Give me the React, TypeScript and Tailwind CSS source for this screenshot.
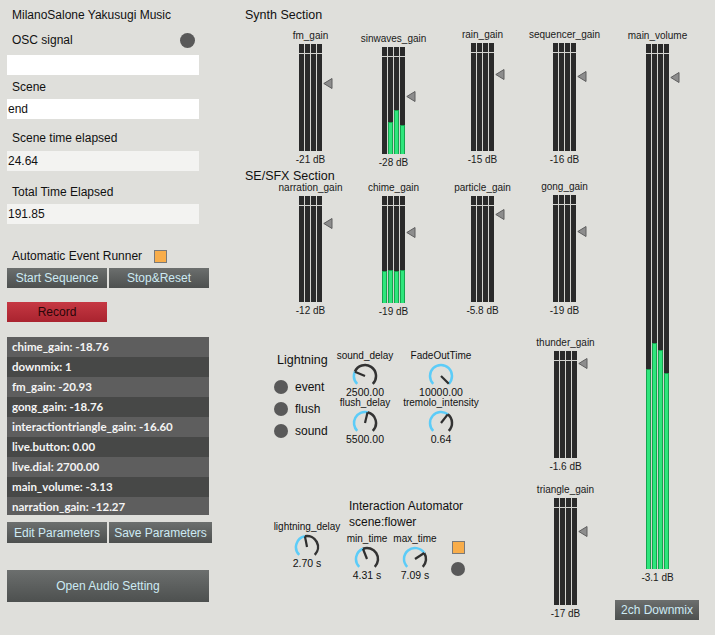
// Max patch control surface: left status/param column + right patcher canvas

type MeterSpec = {
  label: string
  db: string
  pos: string
  h: string
  tri: number
  levels: number[]
}

const meters: MeterSpec[] = [
  { label: "fm_gain", db: "-21 dB", pos: "left-[50px] top-[30px]", h: "h-[107px]", tri: 39, levels: [0, 0, 0, 0] },
  { label: "sinwaves_gain", db: "-28 dB", pos: "left-[133px] top-[33px]", h: "h-[107px]", tri: 49, levels: [0, 32, 44, 29] },
  { label: "rain_gain", db: "-15 dB", pos: "left-[222px] top-[29px]", h: "h-[108px]", tri: 31, levels: [0, 0, 0, 0] },
  { label: "sequencer_gain", db: "-16 dB", pos: "left-[304px] top-[29px]", h: "h-[108px]", tri: 33, levels: [0, 0, 0, 0] },
  { label: "narration_gain", db: "-12 dB", pos: "left-[50px] top-[182px]", h: "h-[106px]", tri: 27, levels: [0, 0, 0, 0] },
  { label: "chime_gain", db: "-19 dB", pos: "left-[133px] top-[182px]", h: "h-[107px]", tri: 36, levels: [32, 33, 32, 33] },
  { label: "particle_gain", db: "-5.8 dB", pos: "left-[222px] top-[182px]", h: "h-[106px]", tri: 18, levels: [0, 0, 0, 0] },
  { label: "gong_gain", db: "-19 dB", pos: "left-[304px] top-[181px]", h: "h-[107px]", tri: 36, levels: [0, 0, 0, 0] },
  { label: "thunder_gain", db: "-1.6 dB", pos: "left-[305px] top-[337px]", h: "h-[107px]", tri: 12, levels: [0, 0, 0, 0] },
  { label: "triangle_gain", db: "-17 dB", pos: "left-[305px] top-[484px]", h: "h-[107px]", tri: 33, levels: [0, 0, 0, 0] },
  { label: "main_volume", db: "-3.1 dB", pos: "left-[397px] top-[30px]", h: "h-[525px]", tri: 33, levels: [200, 226, 219, 196] },
]

const dials = [
  { label: "sound_delay", value: "2500.00", v: 0.25, pos: "left-[105px] top-[350px]" },
  { label: "FadeOutTime", value: "10000.00", v: 1, pos: "left-[181px] top-[350px]" },
  { label: "flush_delay", value: "5500.00", v: 0.55, pos: "left-[105px] top-[397px]" },
  { label: "tremolo_intensity", value: "0.64", v: 0.64, pos: "left-[181px] top-[397px]" },
  { label: "lightning_delay", value: "2.70 s", v: 0.46, pos: "left-[47px] top-[521px]" },
  { label: "min_time", value: "4.31 s", v: 0.42, pos: "left-[107px] top-[533px]" },
  { label: "max_time", value: "7.09 s", v: 0.71, pos: "left-[155px] top-[533px]" },
]

const params = [
  "chime_gain: -18.76",
  "downmix: 1",
  "fm_gain: -20.93",
  "gong_gain: -18.76",
  "interactiontriangle_gain: -16.60",
  "live.button: 0.00",
  "live.dial: 2700.00",
  "main_volume: -3.13",
  "narration_gain: -12.27",
]

const btn =
  "flex items-center justify-center bg-linear-to-b from-[#6c6f6e] to-[#4d504f] text-[12px] text-[#cdeaf3]"

function Meter({ m }: { m: MeterSpec }) {
  return (
    <div className={`absolute flex w-[91px] flex-col items-center ${m.pos}`}>
      <div className="h-[12px] whitespace-nowrap text-[10px] leading-[12px] text-[#1a1a1a]">{m.label}</div>
      <div className={`relative mt-[2px] flex w-[23px] gap-px bg-[#d4d4d0] ${m.h}`}>
        {m.levels.map((lv, i) => (
          <div key={i} className="flex w-[5px] flex-col gap-px">
            <div className="h-[9px] bg-[#2a2a2a]" />
            <div className="relative flex-1 bg-[#2a2a2a]">
              {lv > 0 && (
                <div
                  className="absolute inset-x-0 bottom-0 border-x border-t border-[#17a34f] bg-[#2ee67c]"
                  style={{ height: lv }}
                />
              )}
            </div>
          </div>
        ))}
        <svg
          className="absolute left-full ml-px"
          style={{ top: m.tri - 5 }}
          width="10"
          height="11"
          viewBox="0 0 10 11"
        >
          <polygon points="9,0.5 9,10.5 0.8,5.5" fill="#8d8d8d" stroke="#5e5e5e" strokeWidth="1" />
        </svg>
      </div>
      <div className="mt-[3px] whitespace-nowrap text-[10px] leading-[12px] text-[#1a1a1a]">{m.db}</div>
    </div>
  )
}

function Dial({ label, value, v, pos }: { label: string; value: string; v: number; pos: string }) {
  const pt = (a: number) => [13 + 11 * Math.cos((a * Math.PI) / 180), 13 + 11 * Math.sin((a * Math.PI) / 180)]
  const arc = (from: number, to: number) => {
    const [x1, y1] = pt(from)
    const [x2, y2] = pt(to)
    return `M${x1} ${y1} A11 11 0 ${to - from > 180 ? 1 : 0} 1 ${x2} ${y2}`
  }
  const a = 135 + 270 * v
  const [nx, ny] = pt(a)
  return (
    <div className={`absolute flex w-[90px] flex-col items-center ${pos}`}>
      <div className="h-[12px] whitespace-nowrap text-[10px] leading-[12px] text-[#111]">{label}</div>
      <svg className="mt-px" width="26" height="26" viewBox="0 0 26 26">
        {v < 1 && <path d={arc(a, 405)} fill="none" stroke="#333" strokeWidth="2.5" />}
        <path d={arc(135, a)} fill="none" stroke="#5cccf8" strokeWidth="2.5" />
        <line x1="13" y1="13" x2={nx} y2={ny} stroke="#2e2e2e" strokeWidth="2.2" />
      </svg>
      <div className="-mt-[3px] whitespace-nowrap text-[10.5px] leading-[12px] text-[#111]">{value}</div>
    </div>
  )
}

function LeftPanel() {
  return (
    <div className="flex w-[215px] shrink-0 flex-col pl-[7px] text-[12px] text-[#111]">
      <div className="flex h-[30px] items-center pl-[5px]">MilanoSalone Yakusugi Music</div>
      <div className="flex h-[20px] w-[192px] items-center justify-between pl-[5px] pr-[4px]">
        <span>OSC signal</span>
        <span className="h-[15px] w-[15px] rounded-full bg-[#595959]" />
      </div>
      <div className="mt-[5px] h-[20px] w-[192px] bg-white" />
      <div className="pl-[5px] pt-[4px] pb-[4px] leading-[16px]">Scene</div>
      <div className="flex h-[20px] w-[192px] items-center bg-white pl-px">end</div>
      <div className="pl-[5px] pt-[11px] pb-[5px] leading-[16px]">Scene time elapsed</div>
      <div className="flex h-[20px] w-[192px] items-center bg-[#f3f3f1] pl-px">24.64</div>
      <div className="pl-[5px] pt-[13px] pb-[4px] leading-[16px]">Total Time Elapsed</div>
      <div className="flex h-[20px] w-[192px] items-center bg-[#f3f3f1] pl-px">191.85</div>

      <div className="mt-[24px] flex h-[16px] items-center gap-[12px] pl-[5px]">
        <span>Automatic Event Runner</span>
        <span className="h-[13px] w-[13px] border border-[#7a7a7a] bg-[#f8ad4a]" />
      </div>
      <div className="mt-[4px] flex gap-[2px]">
        <div className={`${btn} h-[20px] w-[100px]`}>Start Sequence</div>
        <div className={`${btn} h-[20px] w-[100px]`}>Stop&amp;Reset</div>
      </div>
      <div className="mt-[14px] flex h-[20px] w-[100px] items-center justify-center bg-linear-to-b from-[#c63843] to-[#a9232f] text-[12px] text-[#2a0709]">
        Record
      </div>

      <div className="mt-[15px] h-[178px] w-[202px] overflow-hidden font-['Lato',sans-serif] text-[11.5px] font-bold text-[#f4f4f4]">
        {params.map((p, i) => (
          <div
            key={p}
            className={`flex h-[20px] items-center pl-[5px] ${i % 2 === 0 ? "bg-[#5e5e5e]" : "bg-[#474847]"}`}
          >
            {p}
          </div>
        ))}
      </div>
      <div className="mt-[7px] flex gap-[2px]">
        <div className={`${btn} h-[21px] w-[100px]`}>Edit Parameters</div>
        <div className={`${btn} h-[21px] w-[103px]`}>Save Parameters</div>
      </div>
      <div className={`${btn} mt-[27px] h-[32px] w-[202px]`}>Open Audio Setting</div>
    </div>
  )
}

export default function App() {
  return (
    <div className="flex h-[635px] w-[715px] overflow-hidden bg-[#dfdfdb] font-['Liberation_Sans',Arial,sans-serif]">
      <LeftPanel />
      {/* patcher canvas: objects sit at their patch coordinates */}
      <div className="relative flex-1 text-[#111]">
        <div className="absolute left-[30px] top-[7px] text-[12.5px] leading-[16px]">Synth Section</div>
        <div className="absolute left-[30px] top-[169px] text-[12.5px] leading-[14px]">SE/SFX Section</div>

        {meters.map((m) => (
          <Meter key={m.label} m={m} />
        ))}

        <div className="absolute left-[62px] top-[352px] text-[12.5px] leading-[16px]">Lightning</div>
        <div className="absolute left-[59px] top-[376px] flex flex-col text-[12px]">
          {["event", "flush", "sound"].map((t) => (
            <div key={t} className="flex h-[22px] items-center gap-[7px]">
              <span className="h-[14px] w-[14px] rounded-full bg-[#595959]" />
              <span>{t}</span>
            </div>
          ))}
        </div>

        {dials.map((d) => (
          <Dial key={d.label} {...d} />
        ))}

        <div className="absolute left-[134px] top-[498px] text-[12px] leading-[16px]">
          <div>Interaction Automator</div>
          <div>scene:flower</div>
        </div>
        <div className="absolute left-[236px] top-[541px] flex flex-col items-center gap-[8px]">
          <span className="h-[13px] w-[13px] border border-[#7a7a7a] bg-[#f8ad4a]" />
          <span className="h-[14px] w-[14px] rounded-full bg-[#595959]" />
        </div>

        <div className={`${btn} absolute left-[400px] top-[600px] h-[20px] w-[84px]`}>2ch Downmix</div>
      </div>
    </div>
  )
}
